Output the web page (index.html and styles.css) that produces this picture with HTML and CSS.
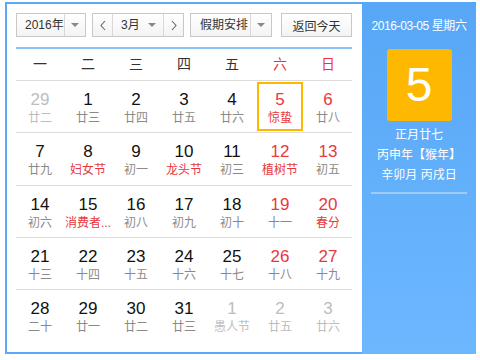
FILE: index.html
```html
<!DOCTYPE html>
<html>
    <head>
        <meta charset="utf-8">
        <link rel="stylesheet" href="styles.css">
    </head>
    <body>
        <div class="calendar">
            <div class="main">
                <div class="toolbar">
                    <div class="select year">
                        <span class="label">2016年</span>
                        <span class="arrow"><i></i></span>
                    </div>
                    <div class="select month">
                        <span class="nav prev">
                            <svg width="6" height="11" viewBox="0 0 6 11"><path d="M5 1 L1 5.5 L5 10" fill="none" stroke="#666" stroke-width="1.1"/></svg>
                        </span>
                        <span class="label">3月</span>
                        <span class="arrow small"><i></i></span>
                        <span class="nav next">
                            <svg width="6" height="11" viewBox="0 0 6 11"><path d="M1 1 L5 5.5 L1 10" fill="none" stroke="#666" stroke-width="1.1"/></svg>
                        </span>
                    </div>
                    <div class="select holiday">
                        <span class="label">假期安排</span>
                        <span class="arrow"><i></i></span>
                    </div>
                    <button class="todayBtn">返回今天</button>
                </div>

                <div class="weekdays">
                    <div>一</div>
                    <div>二</div>
                    <div>三</div>
                    <div>四</div>
                    <div>五</div>
                    <div class="red">六</div>
                    <div class="red">日</div>
                </div>

                <div class="week">
                    <div class="day other"><b>29</b><span>廿二</span></div>
                    <div class="day"><b>1</b><span>廿三</span></div>
                    <div class="day"><b>2</b><span>廿四</span></div>
                    <div class="day"><b>3</b><span>廿五</span></div>
                    <div class="day"><b>4</b><span>廿六</span></div>
                    <div class="day weekend today"><b>5</b><span class="fest">惊蛰</span></div>
                    <div class="day weekend"><b>6</b><span>廿八</span></div>
                </div>
                <div class="week">
                    <div class="day"><b>7</b><span>廿九</span></div>
                    <div class="day"><b>8</b><span class="fest">妇女节</span></div>
                    <div class="day"><b>9</b><span>初一</span></div>
                    <div class="day"><b>10</b><span class="fest">龙头节</span></div>
                    <div class="day"><b>11</b><span>初三</span></div>
                    <div class="day weekend"><b>12</b><span class="fest">植树节</span></div>
                    <div class="day weekend"><b>13</b><span>初五</span></div>
                </div>
                <div class="week">
                    <div class="day"><b>14</b><span>初六</span></div>
                    <div class="day"><b>15</b><span class="fest">消费者...</span></div>
                    <div class="day"><b>16</b><span>初八</span></div>
                    <div class="day"><b>17</b><span>初九</span></div>
                    <div class="day"><b>18</b><span>初十</span></div>
                    <div class="day weekend"><b>19</b><span>十一</span></div>
                    <div class="day weekend"><b>20</b><span class="fest">春分</span></div>
                </div>
                <div class="week">
                    <div class="day"><b>21</b><span>十三</span></div>
                    <div class="day"><b>22</b><span>十四</span></div>
                    <div class="day"><b>23</b><span>十五</span></div>
                    <div class="day"><b>24</b><span>十六</span></div>
                    <div class="day"><b>25</b><span>十七</span></div>
                    <div class="day weekend"><b>26</b><span>十八</span></div>
                    <div class="day weekend"><b>27</b><span>十九</span></div>
                </div>
                <div class="week last">
                    <div class="day"><b>28</b><span>二十</span></div>
                    <div class="day"><b>29</b><span>廿一</span></div>
                    <div class="day"><b>30</b><span>廿二</span></div>
                    <div class="day"><b>31</b><span>廿三</span></div>
                    <div class="day other"><b>1</b><span>愚人节</span></div>
                    <div class="day other"><b>2</b><span>廿五</span></div>
                    <div class="day other"><b>3</b><span>廿六</span></div>
                </div>
            </div>

            <div class="side">
                <div class="sideDate">2016-03-05 星期六</div>
                <div class="bigDay">5</div>
                <div class="lunar">
                    <div>正月廿七</div>
                    <div>丙申年【猴年】</div>
                    <div>辛卯月 丙戌日</div>
                </div>
                <div class="sideLine"></div>
            </div>
        </div>
    </body>
</html>
```

FILE: styles.css
```css
body{
    margin: 0;
    background-color: white;
    font-family: "Liberation Sans", "Noto Sans CJK SC", sans-serif;
}

.calendar{
    display: flex;
    box-sizing: border-box;
    width: 471px;
    height: 352px;
    margin: 2px 0 0 5px;
    border: 2px solid #5ba9f6;
}

.main{
    width: 355px;
    padding-left: 9px;
    box-sizing: border-box;
}

.toolbar{
    display: flex;
    margin-top: 9px;
    height: 24px;
    font-size: 12px;
    color: #333;
}

.select{
    display: flex;
    box-sizing: border-box;
    height: 24px;
    border: 1px solid #c8c8c8;
    background: linear-gradient(#ffffff, #f3f3f3);
    margin-right: 6px;
}

.select .label{
    flex: 1;
    line-height: 22px;
    padding-left: 8px;
}

.select .arrow{
    display: flex;
    align-items: center;
    justify-content: center;
    width: 20px;
    border-left: 1px solid #d8d8d8;
}

.select .arrow i{
    width: 0;
    height: 0;
    border-left: 4px solid transparent;
    border-right: 4px solid transparent;
    border-top: 4px solid #888;
}

.select .arrow.small{
    border-left: none;
    width: 22px;
}

.year{
    width: 70px;
}

.month{
    width: 92px;
}

.month .nav{
    display: flex;
    align-items: center;
    justify-content: center;
    width: 19px;
}

.month .prev{
    border-right: 1px solid #d8d8d8;
}

.month .next{
    border-left: 1px solid #d8d8d8;
}

.holiday{
    width: 82px;
    margin-right: 9px;
}

.holiday .label{
    padding-left: 9px;
}

.todayBtn{
    box-sizing: border-box;
    width: 71px;
    height: 24px;
    padding: 0;
    border: 1px solid #c8c8c8;
    background: linear-gradient(#ffffff, #f3f3f3);
    font-family: inherit;
    font-size: 12px;
    color: #333;
}

.weekdays{
    display: grid;
    grid-template-columns: repeat(7, 48px);
    width: 336px;
    margin-top: 10px;
    border-top: 2px solid #8cc4f7;
    border-bottom: 1px solid #dcdcdc;
    height: 31px;
    line-height: 31px;
    text-align: center;
    font-size: 14px;
    color: #333;
}

.red{
    color: #e8383d;
}

.week{
    display: grid;
    grid-template-columns: repeat(7, 48px);
    width: 336px;
    height: 51.25px;
    border-bottom: 1px solid #dcdcdc;
}

.week.last{
    border-bottom: none;
}

.day{
    margin: 1px;
    border: 2px solid transparent;
    padding-top: 6px;
    text-align: center;
    white-space: nowrap;
}

.day b{
    display: block;
    font-weight: normal;
    font-size: 17px;
    line-height: 20px;
    color: #111;
}

.day span{
    display: block;
    margin: 0 -4px;
    font-size: 12px;
    line-height: 16px;
    color: #8a8a8a;
}

.day.weekend b{
    color: #e8383d;
}

.day span.fest{
    color: #e8383d;
}

.day.other b,
.day.other span{
    color: #bdbdbd;
}

.day.today{
    border-color: #ffb800;
}

.side{
    width: 114px;
    margin: -2px -2px -2px 0;
    background: linear-gradient(#57a7f6, #6db7ff);
    color: white;
    text-align: center;
}

.sideDate{
    margin-top: 14px;
    line-height: 20px;
    font-size: 12px;
    letter-spacing: -0.4px;
}

.bigDay{
    width: 65px;
    height: 72px;
    margin: 13px auto 0 auto;
    border-radius: 3px;
    background-color: #ffb800;
    font-size: 48px;
    line-height: 72px;
}

.lunar{
    margin-top: 4px;
    font-size: 12px;
    line-height: 20px;
}

.sideLine{
    width: 96px;
    height: 2px;
    margin: 7px auto 0 auto;
    background-color: #9fcdfb;
}
```
